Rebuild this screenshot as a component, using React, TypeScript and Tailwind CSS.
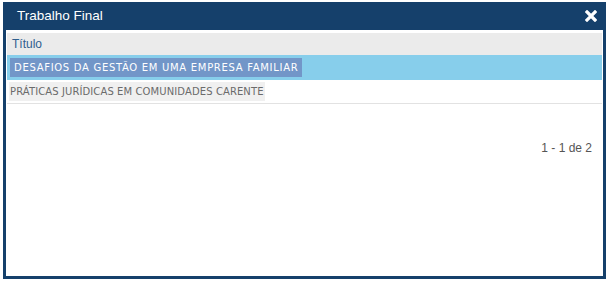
import React from 'react';

const rows = [
  { id: 1, title: 'DESAFIOS DA GESTÃO EM UMA EMPRESA FAMILIAR', selected: true },
  { id: 2, title: 'PRÁTICAS JURÍDICAS EM COMUNIDADES CARENTE', selected: false },
];

export default function App() {
  return (
    <div className="w-[608px] h-[281px] bg-white pl-[3px] pt-[2px] pr-[2px] pb-[2px]" style={{ fontFamily: 'Tahoma, "DejaVu Sans", sans-serif' }}>
      <div className="flex flex-col h-full border-[3px] border-t-0 border-[#15406b] bg-white">
        {/* title bar */}
        <div className="flex items-center justify-between h-[28px] bg-[#15406b] -mx-[3px] pl-[14px] pr-[9px]">
          <span className="text-[13.5px] text-white font-['Liberation_Sans',sans-serif]">Trabalho Final</span>
          <svg width="12" height="12" viewBox="0 0 12 12">
            <path d="M2 2 L10 10 M10 2 L2 10" stroke="white" strokeWidth="3.2" strokeLinecap="square" />
          </svg>
        </div>

        <div className="flex flex-col pt-[3px] px-[1px]">
          <div className="h-[22px] flex items-center bg-[#ebebeb] px-[5px] text-[12px] text-[#2f5f8f] font-['Liberation_Sans',sans-serif]">
            Título
          </div>
          {rows.map((r) => (
            <div
              key={r.id}
              className={
                r.selected
                  ? 'h-[25px] flex items-center bg-[#87ceeb] pl-[3px]'
                  : 'h-[24px] flex items-center bg-white border-b border-[#e2e2e2] pl-[2px]'
              }
            >
              {r.selected ? (
                <span className="bg-[#7296c8] text-white text-[10px] tracking-[0.7px] px-[4px] py-[2px] font-['DejaVu_Sans',sans-serif]">
                  {r.title}
                </span>
              ) : (
                <span className="bg-[#f0f0f0] text-[#6b6b6b] text-[10px] tracking-[0.1px] px-[1px] py-[2px] font-['DejaVu_Sans',sans-serif]">
                  {r.title}
                </span>
              )}
            </div>
          ))}
          <div className="flex justify-end pr-[10px] pt-[35px] text-[12px] text-[#555] font-['Liberation_Sans',sans-serif]">
            1 - 1 de 2
          </div>
        </div>
      </div>
    </div>
  );
}
